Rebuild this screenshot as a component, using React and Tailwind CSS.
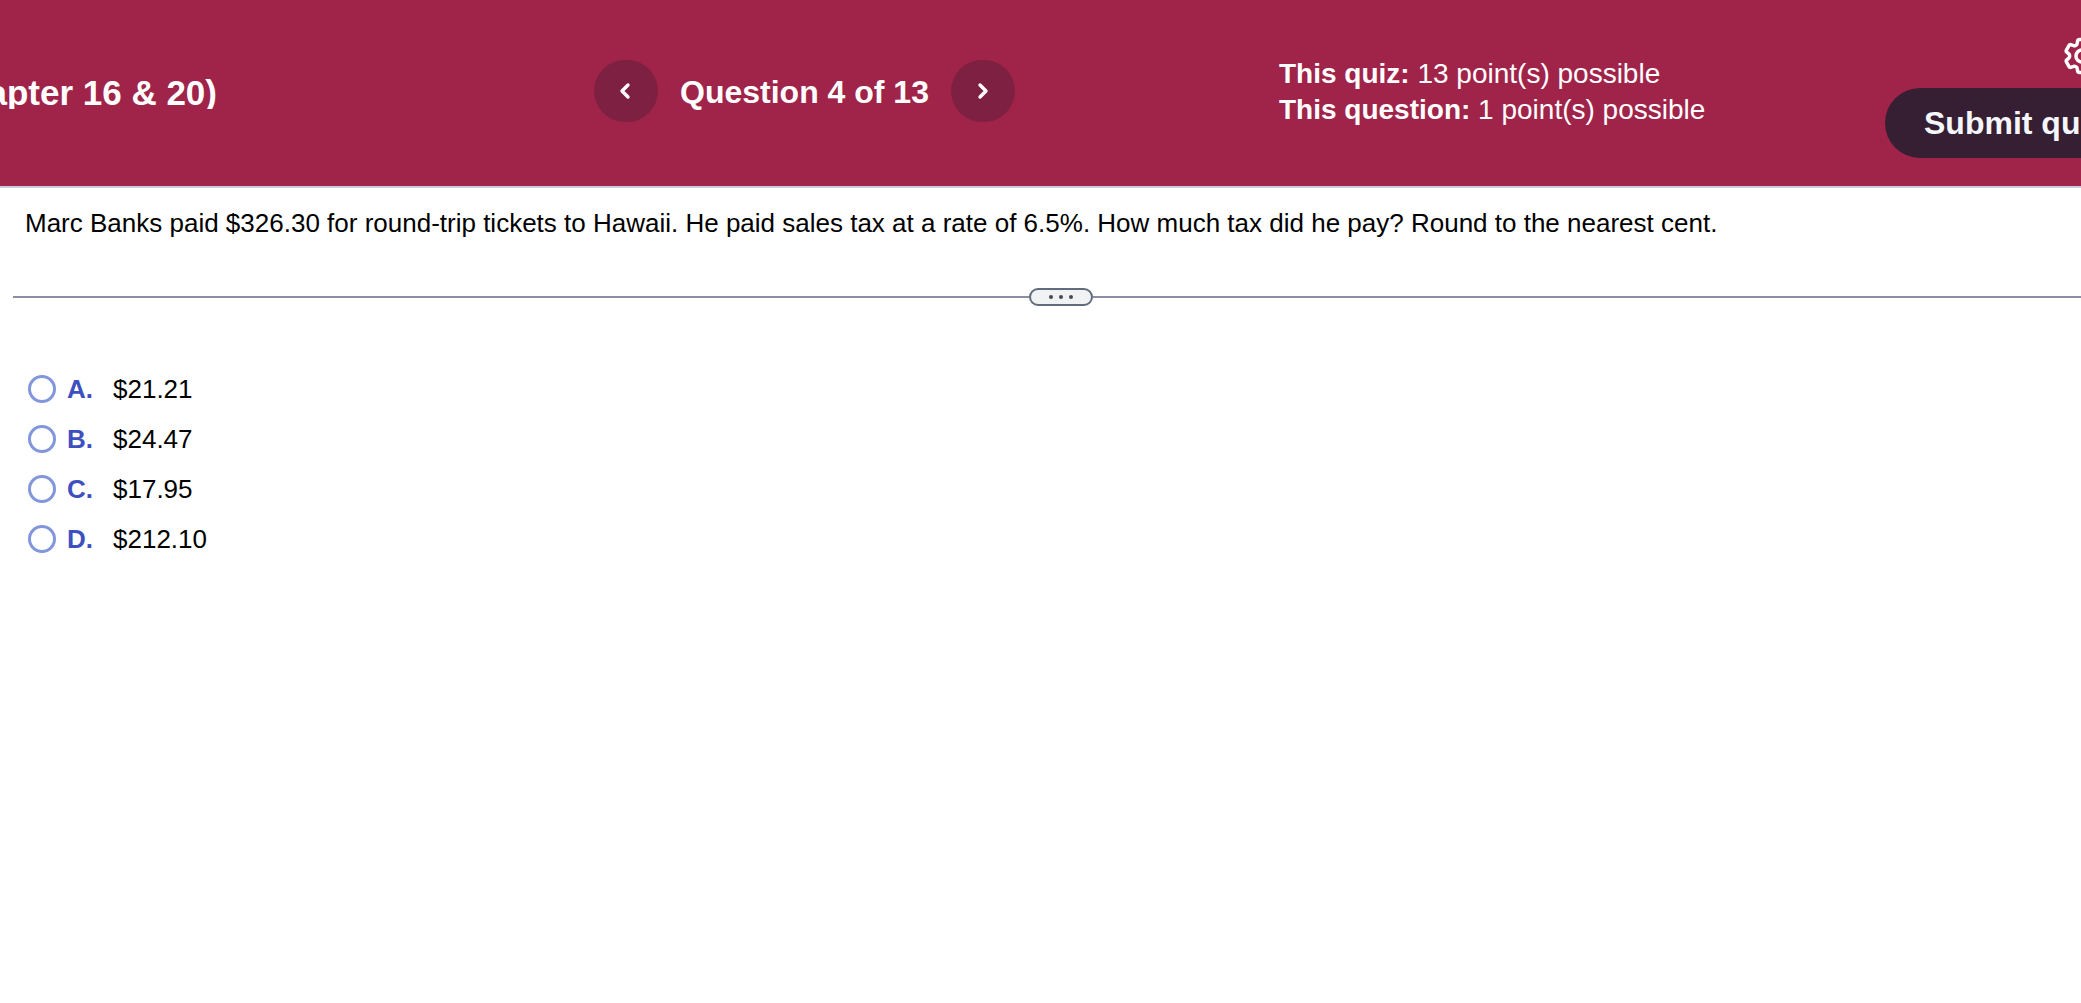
const choices = [
  { letter: "A", value: "$21.21" },
  { letter: "B", value: "$24.47" },
  { letter: "C", value: "$17.95" },
  { letter: "D", value: "$212.10" },
];

function Chevron({ d }) {
  return (
    <svg viewBox="0 0 16 20" className="h-5 w-4" fill="none" stroke="currentColor" strokeWidth="3.4" strokeLinecap="round" strokeLinejoin="round" aria-hidden="true">
      <path d={d} />
    </svg>
  );
}

function Gear() {
  return (
    <svg viewBox="0 0 24 24" className="size-11" fill="none" stroke="currentColor" strokeWidth="1.9" strokeLinecap="round" strokeLinejoin="round" aria-hidden="true">
      <path d="M9.594 3.94c.09-.542.56-.94 1.11-.94h2.593c.55 0 1.02.398 1.11.94l.213 1.281c.063.374.313.686.645.87.074.04.147.083.22.127.325.196.72.257 1.075.124l1.217-.456a1.125 1.125 0 0 1 1.37.49l1.296 2.247a1.125 1.125 0 0 1-.26 1.431l-1.003.827c-.293.241-.438.613-.43.992a7.723 7.723 0 0 1 0 .255c-.008.378.137.75.43.991l1.004.827c.424.35.534.955.26 1.43l-1.298 2.247a1.125 1.125 0 0 1-1.369.491l-1.217-.456c-.355-.133-.75-.072-1.076.124a6.47 6.47 0 0 1-.22.128c-.331.183-.581.495-.644.869l-.213 1.281c-.09.543-.56.94-1.11.94h-2.594c-.55 0-1.019-.398-1.11-.94l-.213-1.281c-.062-.374-.312-.686-.644-.87a6.52 6.52 0 0 1-.22-.127c-.325-.196-.72-.257-1.076-.124l-1.217.456a1.125 1.125 0 0 1-1.369-.49l-1.297-2.247a1.125 1.125 0 0 1 .26-1.431l1.004-.827c.292-.24.437-.613.43-.991a6.932 6.932 0 0 1 0-.255c.007-.38-.138-.751-.43-.992l-1.004-.827a1.125 1.125 0 0 1-.26-1.43l1.297-2.247a1.125 1.125 0 0 1 1.37-.491l1.216.456c.356.133.751.072 1.076-.124.072-.044.146-.086.22-.128.332-.183.582-.495.644-.869l.214-1.28Z" />
      <circle cx="12" cy="12" r="3.3" />
    </svg>
  );
}

export default function App() {
  return (
    <div className="min-h-screen overflow-hidden bg-white font-['Liberation_Sans',Arial,sans-serif] text-black">
      <header className="grid h-[188px] grid-cols-[594fr_685fr_606fr_196fr] border-b-2 border-[#c9cbdc] bg-[#a0244a] text-white">
        <div className="flex pt-[74px]">
          <h1 className="flex h-[35px] w-[217px] justify-end overflow-hidden text-[35px] leading-[38px] font-bold whitespace-nowrap">
            apter 16 &amp; 20)
          </h1>
        </div>
        <nav className="mt-[60px] flex h-[62px] items-center gap-[22px]" aria-label="Questions">
          <button type="button" aria-label="Previous question" className="flex h-[62px] w-16 items-center justify-center rounded-full bg-[#7d2042]">
            <Chevron d="M10 4L4 10L10 16" />
          </button>
          <h2 className="pt-0.5 text-[32px] leading-10 font-bold whitespace-nowrap">Question 4 of 13</h2>
          <button type="button" aria-label="Next question" className="flex h-[62px] w-16 items-center justify-center rounded-full bg-[#7d2042]">
            <Chevron d="M5 4L11 10L5 16" />
          </button>
        </nav>
        <div className="pt-[56px] text-[28px] leading-9 whitespace-nowrap">
          <p><strong>This quiz:</strong> 13 point(s) possible</p>
          <p><strong>This question:</strong> 1 point(s) possible</p>
        </div>
        <div className="flex min-w-0 flex-col gap-[10px] overflow-hidden pt-[34px]">
          <button type="button" aria-label="Settings" className="ml-[175px] size-11">
            <Gear />
          </button>
          <button type="button" className="h-[70px] w-[260px] shrink-0 rounded-full bg-[#361f32] pl-[39px] text-left text-[32px] font-bold whitespace-nowrap text-[#f5f7fd]">
            Submit quiz
          </button>
        </div>
      </header>
      <main>
        <p className="px-[25px] pt-[17px] text-[26px] leading-9">
          Marc Banks paid $326.30 for round-trip tickets to Hawaii. He paid sales tax at a rate of 6.5%. How much tax did he pay? Round to the nearest cent.
        </p>
        <div className="mt-[47px] ml-[13px] flex items-center">
          <div className="h-[2px] flex-1 bg-[#8b8ea5]" />
          <button type="button" aria-label="Resize panels" className="flex h-[18px] w-16 items-center justify-center gap-1.5 rounded-full border-2 border-[#636c7c] bg-[#f1f2f4]">
            <span className="size-1 rounded-full bg-[#454850]" />
            <span className="size-1 rounded-full bg-[#454850]" />
            <span className="size-1 rounded-full bg-[#454850]" />
          </button>
          <div className="h-[2px] w-[988px] bg-[#8b8ea5]" />
        </div>
        <fieldset aria-label="Answer choices" className="mt-[65px] ml-7 flex flex-col gap-[14px]">
          {choices.map(({ letter, value }) => (
            <label key={letter} className="flex h-9 items-center text-[26px] leading-9">
              <input type="radio" name="answer" className="size-7 appearance-none rounded-full border-3 border-[#8296dc] bg-white checked:bg-[#3e50c0]" />
              <span className="ml-[11px] w-[46px] font-bold text-[#3e50c0]">{letter}.</span>
              <span>{value}</span>
            </label>
          ))}
        </fieldset>
      </main>
    </div>
  );
}
